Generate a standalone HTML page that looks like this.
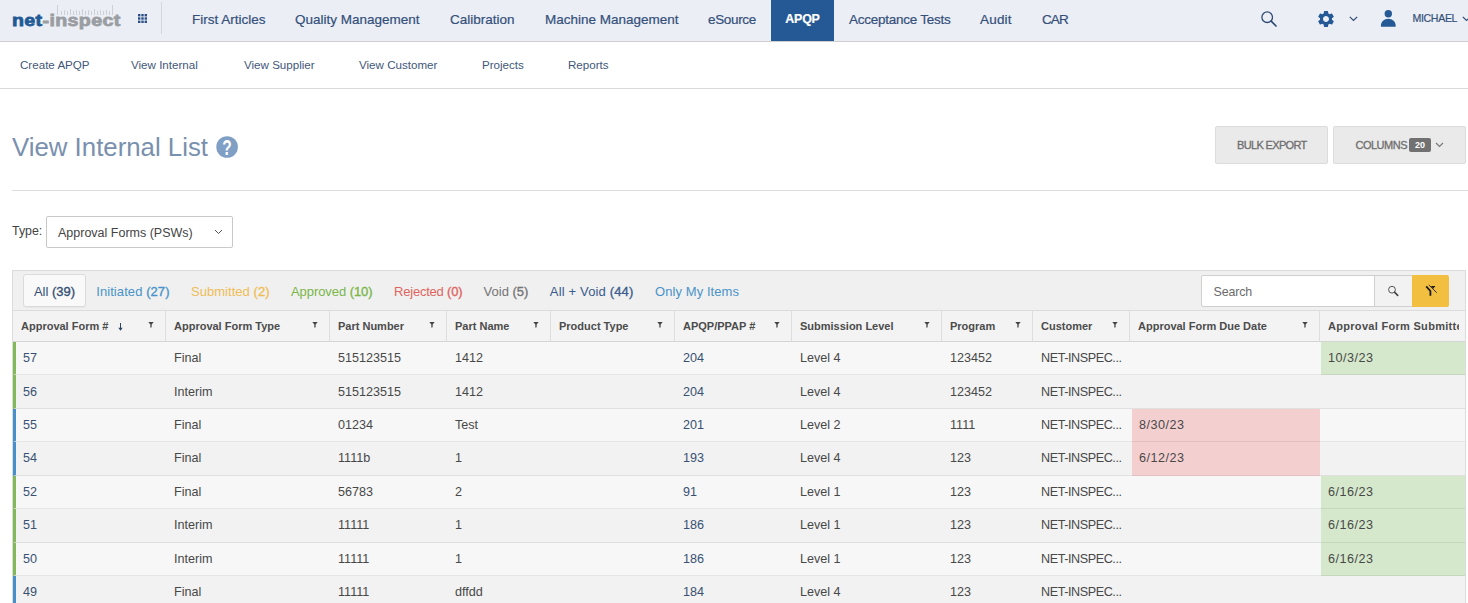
<!DOCTYPE html>
<html lang="en">
<head>
<meta charset="utf-8">
<title>View Internal List</title>
<style>
*{box-sizing:border-box;margin:0;padding:0}
html,body{width:1468px;height:603px;overflow:hidden;background:#fff}
body{font-family:"Liberation Sans",sans-serif;color:#444;position:relative}
.abs{position:absolute;white-space:nowrap}
/* top nav */
#nav{position:absolute;left:0;top:0;width:1468px;height:42px;background:#ebeef5;border-bottom:1px solid #cfcfcf}
#nav .item{position:absolute;top:0;height:41px;line-height:39px;font-size:13.5px;color:#34507a;white-space:nowrap;-webkit-text-stroke:0.2px currentColor}
#nav .active{background:#255995;color:#fff;font-weight:bold;text-align:center}
#logo{position:absolute;left:12px;top:10px;font-weight:bold;font-size:17px;line-height:22px;letter-spacing:0.3px;white-space:nowrap;-webkit-text-stroke:0.8px currentColor;transform-origin:0 0;transform:scaleX(1.155)}
#logo .n{color:#1f5a96}
#logo .i{color:#9a9da2}
#sep{position:absolute;left:161px;top:2px;width:1px;height:32px;background:#d3d6dc}
/* subnav */
#sub{position:absolute;left:0;top:42px;width:1468px;height:47px;border-bottom:1px solid #d9d9d9;background:#fff}
#sub span{position:absolute;top:0;line-height:45px;font-size:11.6px;color:#42587a;white-space:nowrap}
/* title */
#title{position:absolute;left:12px;top:129px;font-size:25.8px;line-height:36px;color:#7990ae;white-space:nowrap;letter-spacing:0}
#hr{position:absolute;left:12px;top:190px;width:1456px;height:1px;background:#dcdcdc}
.btn{position:absolute;top:126px;height:38px;letter-spacing:-0.65px;background:#eaeaea;border:1px solid #dcdcdc;border-radius:2px;font-size:11px;color:#6e6e6e;line-height:37px;white-space:nowrap;font-weight:normal;-webkit-text-stroke:0.3px #6e6e6e}
/* type select */
#typel{position:absolute;left:12px;top:223px;font-size:12.4px;line-height:16px;color:#444}
#types{position:absolute;left:46px;top:216px;width:187px;height:32px;border:1px solid #c9c9c9;border-radius:2px;background:#fff;font-size:12.5px;line-height:32px;padding-left:11px;color:#444}
/* grid */
#grid{position:absolute;left:12px;top:270px;width:1454px;height:340px;border:1px solid #dcdcdc;background:#f0f0f0;overflow:hidden}
#tabs span{position:absolute;top:6px;height:31px;line-height:30px;font-size:13px;white-space:nowrap}
#tabs b{font-weight:normal;-webkit-text-stroke:0.35px currentColor}
#tab1{left:10px;top:3px !important;width:63px;height:33px !important;line-height:32px !important;padding-top:1px;text-align:center;background:#f9f9f9;border:1px solid #dbdbdb;border-radius:3px;color:#344e74;box-shadow:0 1px 1px rgba(0,0,0,0.04)}
#searchbox{position:absolute;left:1188px;top:4px;width:174px;height:32px;background:#fff;border:1px solid #cfcfcf;border-radius:2px 0 0 2px;font-size:12.4px;line-height:32px;padding-left:11.5px;color:#6b6b6b;letter-spacing:-0.1px}
#sbtn{position:absolute;left:1361px;top:4px;width:38px;height:32px;background:#f2f2f2;border:1px solid #cfcfcf;border-right:none}
#ybtn{position:absolute;left:1399px;top:4px;width:37px;height:32px;background:#f3bf40;border-radius:0 2px 2px 0}
table{position:absolute;left:0;top:39px;border-collapse:separate;border-spacing:0;table-layout:fixed;width:1452px}
th{height:32px;background:#f3f3f3;border-top:1px solid #dcdcdc;border-bottom:1px solid #d5d5d5;border-left:1px solid #dedede;font-size:11px;font-weight:bold;color:#4c4c4c;text-align:left;padding:0 6px 0 8px;white-space:nowrap;overflow:hidden;position:relative}
th:first-child{border-left:none;padding-left:8px}
th svg.f{position:absolute;right:11.200px;top:11px}
td{height:33.43px;font-size:12.6px;color:#484848;padding:0 0 0 9px;white-space:nowrap;overflow:hidden;border-bottom:1px solid rgba(0,0,0,0.07);vertical-align:middle}
tr.o{background:#f7f7f7}
tr.e{background:#f2f2f2}
td.lnk{color:#385173}
td.cu{letter-spacing:-0.42px}
td.g{border-left:3px solid #84b95a;padding-left:7px}
td.b{border-left:3px solid #4690cb;padding-left:7px}
td.red{background:linear-gradient(90deg,transparent 3px,#f4cfd0 3px);padding-left:10px;letter-spacing:0.5px}
td.rt{background:linear-gradient(90deg,#f4cfd0 1.5px,transparent 1.5px)}
td.grn{background:linear-gradient(90deg,transparent 2px,#d5e8cc 2px);padding-left:9px;letter-spacing:0.5px}
</style>
</head>
<body>
<div id="nav">
  <div id="logo"><span class="n">net</span><span class="i">-inspect</span></div>
  <svg class="abs" style="left:55px;top:3.500px" width="60" height="12" viewBox="0 0 60 12"><g stroke="#cdd0d7" stroke-width="1"><path d="M2.5 1v10M6.5 7v4M9.500 6v5M12.5 7v4M15.5 5v6M18.5 7v4M21.5 6v5M24.5 7v4M27.5 5v6M30.5 7v4M33.500 6v5M36.5 7v4M39.500 5v6M42.5 7v4M45.500 6v5M48.500 7v4M51.500 6v5M54.500 7v4M57.500 1v10"/></g></svg>
  <svg class="abs" style="left:138px;top:14px" width="9" height="9" viewBox="0 0 9 9"><g fill="#2a4f86"><rect x="0" y="0" width="2.4" height="2.4"/><rect x="3.300" y="0" width="2.4" height="2.4"/><rect x="6.600" y="0" width="2.4" height="2.4"/><rect x="0" y="3.300" width="2.4" height="2.4"/><rect x="3.300" y="3.300" width="2.4" height="2.4"/><rect x="6.600" y="3.300" width="2.4" height="2.4"/><rect x="0" y="6.600" width="2.4" height="2.4"/><rect x="3.300" y="6.600" width="2.4" height="2.4"/><rect x="6.600" y="6.600" width="2.400" height="2.4"/></g></svg>
  <div id="sep"></div>
  <div class="item" style="left:192px">First Articles</div>
  <div class="item" style="left:295px">Quality Management</div>
  <div class="item" style="left:450px">Calibration</div>
  <div class="item" style="left:545px">Machine Management</div>
  <div class="item" style="left:708px;letter-spacing:-0.35px">eSource</div>
  <div class="item active" style="left:771px;width:63px;font-size:12.4px;letter-spacing:-0.2px">APQP</div>
  <div class="item" style="left:849px;letter-spacing:-0.25px">Acceptance Tests</div>
  <div class="item" style="left:980px;letter-spacing:0.2px">Audit</div>
  <div class="item" style="left:1042px;letter-spacing:-0.9px">CAR</div>
  <svg class="abs" style="left:1260px;top:10px" width="18" height="18" viewBox="0 0 18 18"><circle cx="7.200" cy="7.200" r="5.300" fill="none" stroke="#2f4b73" stroke-width="1.300"/><path d="M11.200 11.200l4.800 4.800" stroke="#2f4b73" stroke-width="1.700" stroke-linecap="round"/></svg>
  <svg class="abs" style="left:1316.400px;top:8.500px" width="20" height="20" viewBox="0 0 24 24"><path fill="#255995" d="M19.140 12.940c.04-.3.060-.61.060-.94 0-.32-.02-.64-.07-.94l2.030-1.580a.49.490 0 0 0 .12-.61l-1.920-3.320a.488.488 0 0 0-.59-.22l-2.390.96c-.5-.38-1.030-.7-1.620-.94l-.36-2.540a.484.484 0 0 0-.48-.41h-3.840c-.24 0-.43.170-.47.410l-.36 2.540c-.59.240-1.130.57-1.620.94l-2.390-.96c-.22-.08-.47 0-.59.220L2.740 8.870c-.12.210-.08.470.12.610l2.030 1.580c-.05.300-.09.630-.09.940s.2.640.07.940l-2.030 1.580a.49.490 0 0 0-.12.610l1.920 3.320c.12.220.37.290.59.220l2.390-.96c.5.380 1.030.7 1.620.94l.36 2.540c.5.240.24.410.48.410h3.840c.24 0 .44-.17.470-.41l.36-2.540c.59-.24 1.130-.56 1.620-.94l2.390.96c.22.080.47 0 .59-.22l1.920-3.320c.12-.22.070-.47-.12-.61l-2.010-1.580zM12 15.600c-1.980 0-3.600-1.620-3.600-3.600s1.620-3.600 3.600-3.600 3.600 1.620 3.600 3.600-1.620 3.600-3.600 3.600z"/></svg>
  <svg class="abs" style="left:1349px;top:15.500px" width="9" height="6" viewBox="0 0 9 6"><path d="M0.800 0.800L4.500 4.500L8.200 0.800" fill="none" stroke="#2f4b73" stroke-width="1.200"/></svg>
  <svg class="abs" style="left:1381px;top:10px;overflow:visible" width="15" height="17" viewBox="0 0 15 17"><circle cx="7.300" cy="3.700" r="3.700" fill="#255995"/><path d="M0.200 16.800c-0.300-0.100-0.300-0.500-0.300-1c0-4 3.200-7 7.400-7s7.400 3 7.400 7c0 0.500 0 0.900-0.300 1z" fill="#255995"/></svg>
  <div class="item" style="left:1412.500px;font-size:10.6px;line-height:36px;letter-spacing:-0.35px">MICHAEL</div>
  <svg class="abs" style="left:1461.500px;top:15.500px" width="9" height="6" viewBox="0 0 9 6"><path d="M0.800 0.800L4.500 4.500L8.200 0.800" fill="none" stroke="#2f4b73" stroke-width="1.200"/></svg>
</div>
<div id="sub">
  <span style="left:20px">Create APQP</span>
  <span style="left:131px">View Internal</span>
  <span style="left:244px">View Supplier</span>
  <span style="left:359px">View Customer</span>
  <span style="left:482px">Projects</span>
  <span style="left:568px">Reports</span>
</div>
<div id="title">View Internal List</div>
<svg class="abs" style="left:216px;top:136px" width="23" height="23" viewBox="0 0 23 23"><circle cx="11.100" cy="11" r="10.800" fill="#809fc5"/><text transform="translate(11.100,18.800) scale(0.690,1)" text-anchor="middle" font-family="Liberation Sans, sans-serif" font-weight="bold" font-size="22.5" fill="#fff">?</text></svg>
<div class="btn" style="left:1215px;width:113px;padding-left:21px">BULK EXPORT</div>
<div class="btn" style="left:1333px;width:133px;padding-left:21.500px;letter-spacing:-0.5px">COLUMNS</div>
<div class="abs" style="left:1409px;top:138px;width:22px;height:14px;background:#717171;border-radius:2px;color:#fff;font-size:9px;font-weight:bold;line-height:14px;text-align:center">20</div>
<svg class="abs" style="left:1435px;top:142px" width="9" height="6" viewBox="0 0 9 6"><path d="M1 1L4.500 4.500L8 1" fill="none" stroke="#777" stroke-width="1.200"/></svg>
<div id="hr"></div>
<div id="typel">Type:</div>
<div id="types">Approval Forms (PSWs)</div>
<svg class="abs" style="left:214px;top:229px" width="9" height="6" viewBox="0 0 9 6"><path d="M1 1L4.500 4.500L8 1" fill="none" stroke="#555" stroke-width="1"/></svg>
<div id="grid">
  <div id="tabs">
    <span id="tab1">All <b>(39)</b></span>
    <span style="left:83.200px;color:#4a93c9;letter-spacing:0.08px">Initiated <b>(27)</b></span>
    <span style="left:178px;color:#efbd55;letter-spacing:0.04px">Submitted <b>(2)</b></span>
    <span style="left:278px;color:#7ab648;letter-spacing:-0.07px">Approved <b>(10)</b></span>
    <span style="left:381px;color:#e0645e;letter-spacing:-0.21px">Rejected <b>(0)</b></span>
    <span style="left:470.500px;color:#747474;letter-spacing:0.02px">Void <b>(5)</b></span>
    <span style="left:536.800px;color:#3a5c8d;letter-spacing:0.16px">All + Void <b>(44)</b></span>
    <span style="left:642px;color:#4a93c9;letter-spacing:0.08px">Only My Items</span>
  </div>
  <div id="searchbox">Search</div>
  <div id="sbtn"><svg class="abs" style="left:0;top:0" width="38" height="31" viewBox="0 0 38 31"><circle cx="17" cy="13.700" r="3.400" fill="none" stroke="#444" stroke-width="0.900"/><path d="M19.700 16.400l3 3" stroke="#444" stroke-width="1.600" stroke-linecap="round"/></svg></div>
  <div id="ybtn"><svg class="abs" style="left:0;top:0" width="37" height="32" viewBox="0 0 37 32"><path d="M14.200 11.300L18.400 16V20.800" fill="none" stroke="#1a1a1a" stroke-width="1.800"/><path d="M18.900 11h4.500l-2.250 2.800z" fill="#1a1a1a"/><path d="M16.800 9.900L24.700 17.700" stroke="#1a1a1a" stroke-width="0.900"/></svg></div>
  <table>
    <colgroup><col style="width:152px"><col style="width:164px"><col style="width:117px"><col style="width:104px"><col style="width:124px"><col style="width:117px"><col style="width:150px"><col style="width:91px"><col style="width:97px"><col style="width:190px"><col style="width:146px"></colgroup>
    <tr>
      <th>Approval Form # <svg style="position:absolute;left:105px;top:12px" width="5" height="8" viewBox="0 0 5 8"><path d="M2.500 0V6" stroke="#2e4460" stroke-width="1"/><path d="M0.300 4.800h4.400L2.500 7.800z" fill="#2e4460"/></svg><svg class="f" width="6" height="6" viewBox="0 0 6 6"><path d="M0.300 0h5.400L3.650 2.600V5.200L2.350 5.800V2.600z" fill="#444"/></svg></th>
      <th>Approval Form Type<svg class="f" width="6" height="6" viewBox="0 0 6 6"><path d="M0.300 0h5.400L3.650 2.600V5.200L2.350 5.800V2.600z" fill="#444"/></svg></th>
      <th>Part Number<svg class="f" width="6" height="6" viewBox="0 0 6 6"><path d="M0.300 0h5.400L3.650 2.600V5.200L2.350 5.800V2.600z" fill="#444"/></svg></th>
      <th>Part Name<svg class="f" width="6" height="6" viewBox="0 0 6 6"><path d="M0.300 0h5.400L3.650 2.600V5.200L2.350 5.800V2.600z" fill="#444"/></svg></th>
      <th>Product Type<svg class="f" width="6" height="6" viewBox="0 0 6 6"><path d="M0.300 0h5.400L3.650 2.600V5.200L2.350 5.800V2.600z" fill="#444"/></svg></th>
      <th>APQP/PPAP #<svg class="f" width="6" height="6" viewBox="0 0 6 6"><path d="M0.300 0h5.400L3.650 2.600V5.200L2.350 5.800V2.600z" fill="#444"/></svg></th>
      <th>Submission Level<svg class="f" width="6" height="6" viewBox="0 0 6 6"><path d="M0.300 0h5.400L3.650 2.600V5.200L2.350 5.800V2.600z" fill="#444"/></svg></th>
      <th>Program<svg class="f" width="6" height="6" viewBox="0 0 6 6"><path d="M0.300 0h5.400L3.650 2.600V5.200L2.350 5.800V2.600z" fill="#444"/></svg></th>
      <th>Customer<svg class="f" width="6" height="6" viewBox="0 0 6 6"><path d="M0.300 0h5.400L3.650 2.600V5.200L2.350 5.800V2.600z" fill="#444"/></svg></th>
      <th>Approval Form Due Date<svg class="f" width="6" height="6" viewBox="0 0 6 6"><path d="M0.300 0h5.400L3.650 2.600V5.200L2.350 5.800V2.600z" fill="#444"/></svg></th>
      <th style="letter-spacing:0.3px"><span style="display:block;width:131px;overflow:hidden">Approval Form Submitted Date</span></th>
    </tr>
    <tr class="o"><td class="lnk g">57</td><td>Final</td><td>515123515</td><td>1412</td><td></td><td class="lnk">204</td><td>Level 4</td><td>123452</td><td class="cu">NET-INSPEC...</td><td></td><td class="grn">10/3/23</td></tr>
    <tr class="e"><td class="lnk g">56</td><td>Interim</td><td>515123515</td><td>1412</td><td></td><td class="lnk">204</td><td>Level 4</td><td>123452</td><td class="cu">NET-INSPEC...</td><td></td><td></td></tr>
    <tr class="o"><td class="lnk b">55</td><td>Final</td><td>01234</td><td>Test</td><td></td><td class="lnk">201</td><td>Level 2</td><td>1111</td><td class="cu">NET-INSPEC...</td><td class="red">8/30/23</td><td class="rt"></td></tr>
    <tr class="e"><td class="lnk b">54</td><td>Final</td><td>1111b</td><td>1</td><td></td><td class="lnk">193</td><td>Level 4</td><td>123</td><td class="cu">NET-INSPEC...</td><td class="red">6/12/23</td><td class="rt"></td></tr>
    <tr class="o"><td class="lnk g">52</td><td>Final</td><td>56783</td><td>2</td><td></td><td class="lnk">91</td><td>Level 1</td><td>123</td><td class="cu">NET-INSPEC...</td><td></td><td class="grn">6/16/23</td></tr>
    <tr class="e"><td class="lnk g">51</td><td>Interim</td><td>11111</td><td>1</td><td></td><td class="lnk">186</td><td>Level 1</td><td>123</td><td class="cu">NET-INSPEC...</td><td></td><td class="grn">6/16/23</td></tr>
    <tr class="o"><td class="lnk g">50</td><td>Interim</td><td>11111</td><td>1</td><td></td><td class="lnk">186</td><td>Level 1</td><td>123</td><td class="cu">NET-INSPEC...</td><td></td><td class="grn">6/16/23</td></tr>
    <tr class="e"><td class="lnk b">49</td><td>Final</td><td>11111</td><td>dffdd</td><td></td><td class="lnk">184</td><td>Level 4</td><td>123</td><td class="cu">NET-INSPEC...</td><td></td><td></td></tr>
  </table>
</div>
</body>
</html>
